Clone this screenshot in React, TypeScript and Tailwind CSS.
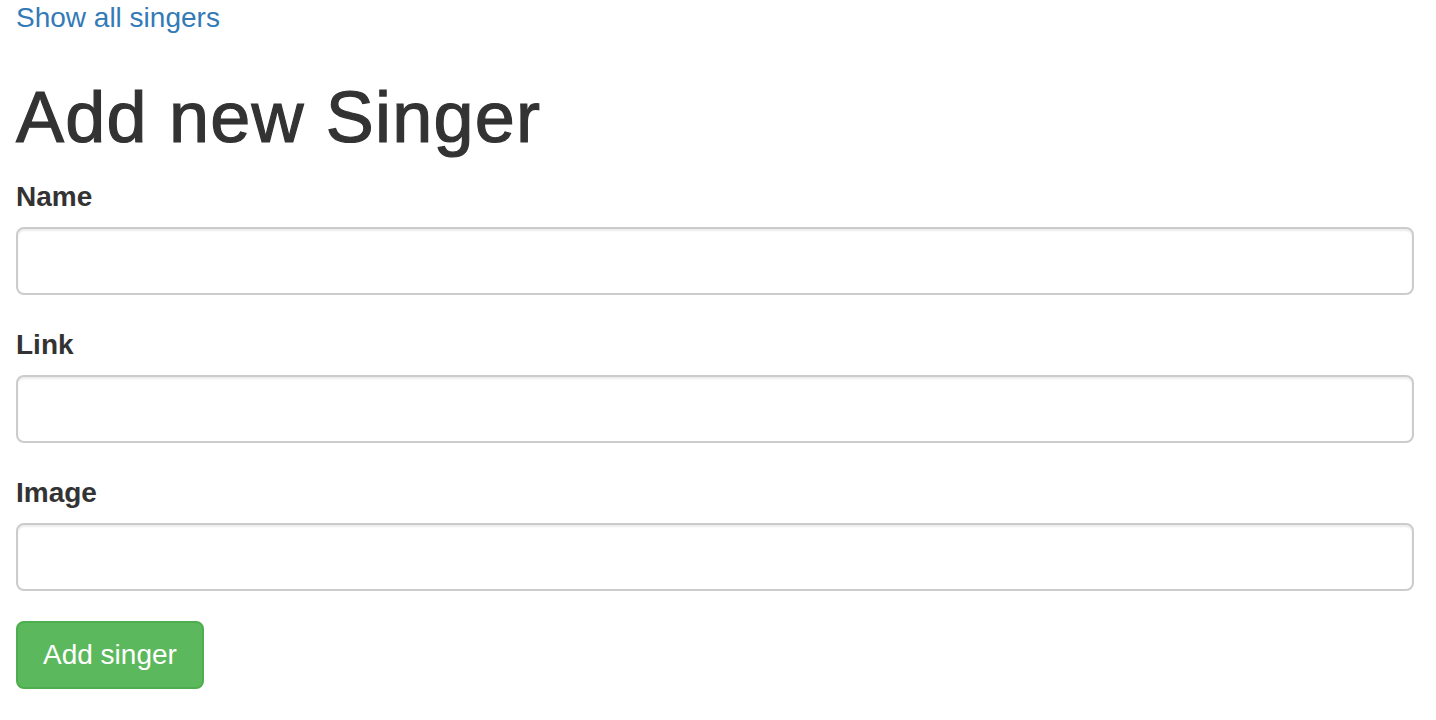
export default function App() {
  const fields = ["Name", "Link", "Image"];

  return (
    <div className="-mt-[2px] pl-4 pr-[22px] font-['Liberation_Sans',Arial,sans-serif] text-[28px] leading-[40px] text-[#333] bg-white min-h-screen">
      <div>
        <a href="#" className="text-[#337ab7]">
          Show all singers
        </a>
      </div>

      <h1 className="mt-10 mb-5 text-[72px] leading-[1.1] font-medium tracking-[1.2px] [-webkit-text-stroke:1.2px_#333]">
        Add new Singer
      </h1>

      <form onSubmit={(e) => e.preventDefault()}>
        {fields.map((f) => (
          <div key={f} className="mb-[30px]">
            <label className="block font-bold mb-[10px]">{f}</label>
            <input
              type="text"
              className="block w-full h-[68px] px-6 border-2 border-[#ccc] rounded-[8px] bg-white shadow-[inset_0_2px_2px_rgba(0,0,0,0.075)] outline-none"
            />
          </div>
        ))}

        <button
          type="submit"
          className="bg-[#5cb85c] border-2 border-[#4cae4c] text-white px-[25px] py-3 rounded-[8px] leading-[40px]"
        >
          Add singer
        </button>
      </form>
    </div>
  );
}
